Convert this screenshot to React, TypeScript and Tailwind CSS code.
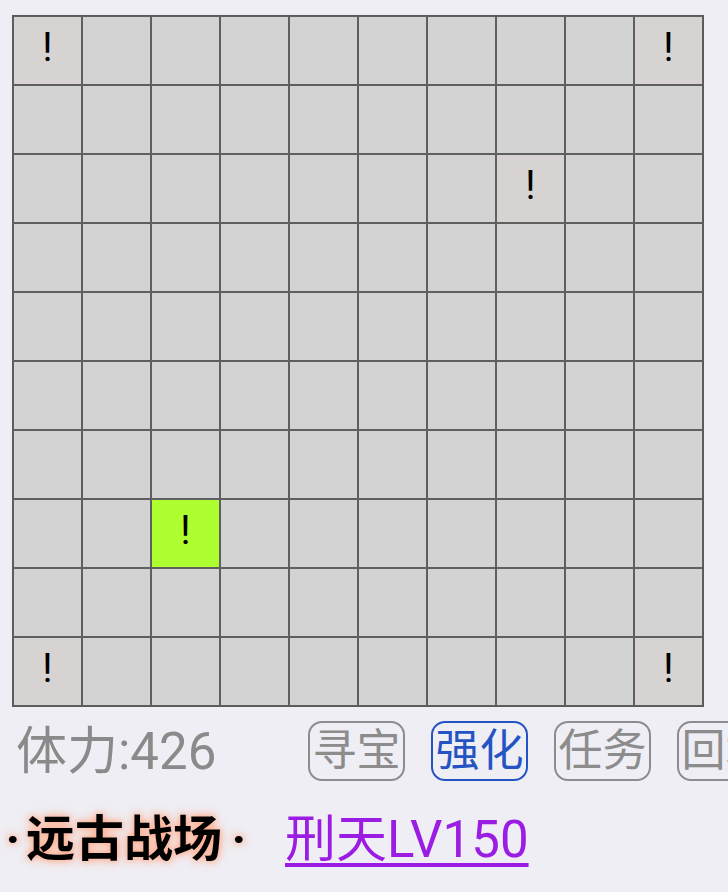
import React from 'react';

const marks: Record<string, 'plain' | 'green'> = {
  '0-0': 'plain',
  '0-9': 'plain',
  '2-7': 'plain',
  '7-2': 'green',
  '9-0': 'plain',
  '9-9': 'plain',
};

const buttons = [
  { label: '寻宝', active: false },
  { label: '强化', active: true },
  { label: '任务', active: false },
  { label: '回城', active: false },
];

export default function App() {
  const rows = Array.from({ length: 10 }, (_, r) => r);
  const cols = Array.from({ length: 10 }, (_, c) => c);

  return (
    <div className="min-h-[892px] w-[728px] overflow-hidden bg-[#efeef4] font-['Roboto','Noto_Sans_CJK_SC',sans-serif] pt-[15px]">
      {/* map grid */}
      <div className="ml-[12px] w-[692px] border border-[#5a5a5a] grid grid-cols-10">
        {rows.map((r) =>
          cols.map((c) => {
            const m = marks[`${r}-${c}`];
            return (
              <div
                key={`${r}-${c}`}
                className={`h-[69px] w-[69px] border border-[#5f5f5f] flex items-center justify-center text-[40px] leading-none text-black ${
                  m === 'green' ? 'bg-[#adff2f]' : m ? 'bg-[#d7d3d2]' : 'bg-[#d3d3d3]'
                }`}
              >
                {m ? <span className="-mt-[6px]">!</span> : null}
              </div>
            );
          })
        )}
      </div>

      {/* stats + actions */}
      <div className="mt-[14px] h-[60px] flex items-center whitespace-nowrap">
        <div className="w-[308px] shrink-0 pl-[16px] text-[51px] leading-none text-[#8a8a8a]">体力:426</div>
        <div className="flex shrink-0 gap-[26px]">
          {buttons.map((b) => (
            <button
              key={b.label}
              className={`h-[60px] w-[97px] shrink-0 rounded-[14px] border-2 flex items-center justify-center text-[44px] leading-none ${
                b.active ? 'border-[#2453c4] text-[#2453c4]' : 'border-[#8c8c8c] text-[#8c8c8c]'
              }`}
            >
              {b.label}
            </button>
          ))}
        </div>
      </div>

      {/* location */}
      <div className="mt-[28px] h-[60px] flex items-center whitespace-nowrap">
        <span className="w-[285px] shrink-0 text-[49px] font-bold leading-none text-black [text-shadow:0_0_6px_#ffa585,0_0_12px_#ffb496]">
          <span className="inline-block w-[26px] text-center">·</span>
          远古战场
          <span className="inline-block w-[30px] pl-[4px] text-center">·</span>
        </span>
        <a className="text-[51px] leading-none text-[#9b1de3] underline decoration-[4px] underline-offset-[6px]">
          刑天LV150
        </a>
      </div>
    </div>
  );
}
